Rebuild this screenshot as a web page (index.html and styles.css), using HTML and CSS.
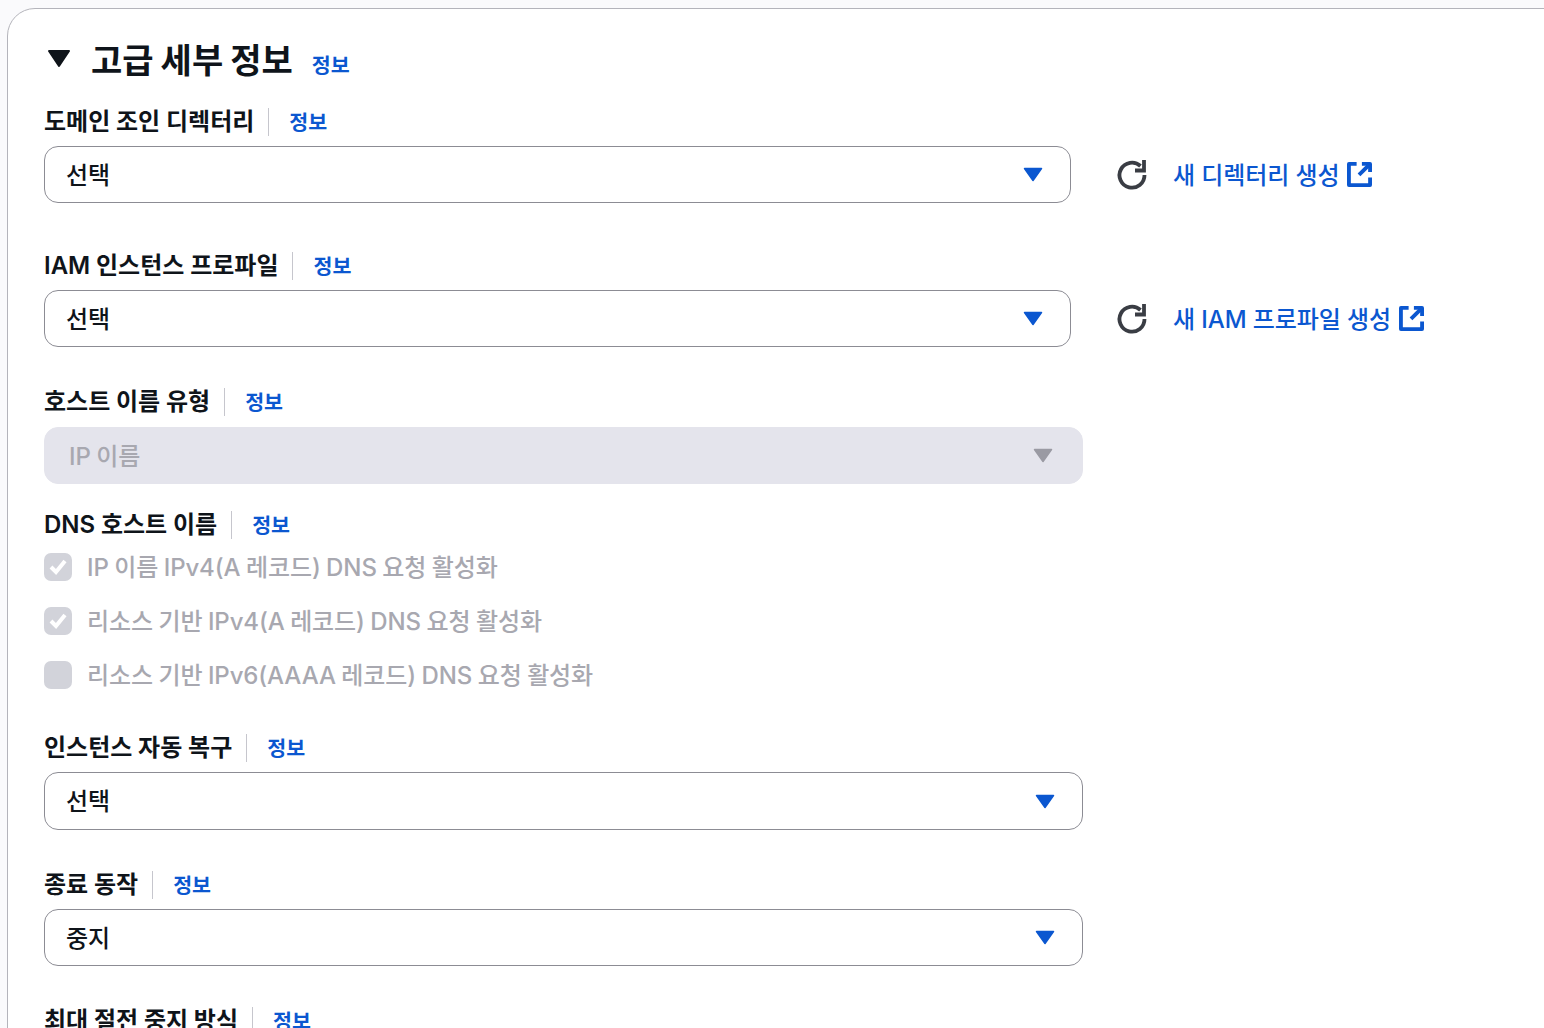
FILE: index.html
```html
<!DOCTYPE html>
<html lang="ko">
<head>
<meta charset="utf-8">
<title>고급 세부 정보</title>
<link rel="stylesheet" href="styles.css">
</head>
<body>
<section class="card">
  <header class="head">
    <svg class="caret" viewBox="0 0 24 20" aria-hidden="true"><path d="M2 2h20L12 17z"/></svg>
    <h2 class="title">고급 세부 정보</h2>
    <a class="info title-info">정보</a>
  </header>

  <div class="field first">
    <div class="label-row"><span class="label">도메인 조인 디렉터리</span><a class="info">정보</a></div>
    <div class="control-row">
      <div class="select narrow"><span class="value">선택</span><svg class="arrow" viewBox="0 0 20 15"><path d="M1.500 1.500h17L10 13.500z"/></svg></div>
      <svg class="refresh" viewBox="0 0 30 30" aria-hidden="true"><path d="M23.500 6A12.500 12.500 0 1 0 27.500 15"/><path d="M27 0v10.500H18"/></svg>
      <a class="ext"><span class="link-text">새 디렉터리 생성</span><svg class="ext-icon" viewBox="0 0 26 26" aria-hidden="true"><path d="M10 2H2v22h22v-8"/><path d="M15.500 2H24v8.500"/><path d="M23 3 12.500 13.500"/></svg></a>
    </div>
  </div>

  <div class="field second">
    <div class="label-row"><span class="label">IAM 인스턴스 프로파일</span><a class="info">정보</a></div>
    <div class="control-row">
      <div class="select narrow"><span class="value">선택</span><svg class="arrow" viewBox="0 0 20 15"><path d="M1.500 1.500h17L10 13.500z"/></svg></div>
      <svg class="refresh" viewBox="0 0 30 30" aria-hidden="true"><path d="M23.500 6A12.500 12.500 0 1 0 27.500 15"/><path d="M27 0v10.500H18"/></svg>
      <a class="ext"><span class="link-text">새 IAM 프로파일 생성</span><svg class="ext-icon" viewBox="0 0 26 26" aria-hidden="true"><path d="M10 2H2v22h22v-8"/><path d="M15.500 2H24v8.500"/><path d="M23 3 12.500 13.500"/></svg></a>
    </div>
  </div>

  <div class="field host">
    <div class="label-row"><span class="label">호스트 이름 유형</span><a class="info">정보</a></div>
    <div class="select wide disabled"><span class="value">IP 이름</span><svg class="arrow" viewBox="0 0 20 15"><path d="M1.500 1.500h17L10 13.500z"/></svg></div>
  </div>

  <div class="field dns">
    <div class="label-row"><span class="label">DNS 호스트 이름</span><a class="info">정보</a></div>
    <div class="checks">
      <label class="check"><span class="box"><svg viewBox="0 0 28 28"><path d="M7 14l5 5 9-11"/></svg></span><span class="check-text">IP 이름 IPv4(A 레코드) DNS 요청 활성화</span></label>
      <label class="check"><span class="box"><svg viewBox="0 0 28 28"><path d="M7 14l5 5 9-11"/></svg></span><span class="check-text">리소스 기반 IPv4(A 레코드) DNS 요청 활성화</span></label>
      <label class="check"><span class="box"></span><span class="check-text">리소스 기반 IPv6(AAAA 레코드) DNS 요청 활성화</span></label>
    </div>
  </div>

  <div class="field recovery">
    <div class="label-row"><span class="label">인스턴스 자동 복구</span><a class="info">정보</a></div>
    <div class="select wide"><span class="value">선택</span><svg class="arrow" viewBox="0 0 20 15"><path d="M1.500 1.500h17L10 13.500z"/></svg></div>
  </div>

  <div class="field">
    <div class="label-row"><span class="label">종료 동작</span><a class="info">정보</a></div>
    <div class="select wide"><span class="value">중지</span><svg class="arrow" viewBox="0 0 20 15"><path d="M1.500 1.500h17L10 13.500z"/></svg></div>
  </div>

  <div class="field">
    <div class="label-row"><span class="label">최대 절전 중지 방식</span><a class="info">정보</a></div>
  </div>
</section>
</body>
</html>
```
FILE: styles.css
```css
* { box-sizing: border-box; }
html, body { height: 100%; }
body {
  margin: 0;
  height: 1028px;
  overflow: hidden;
  background: #fafafc;
  color: #0f141a;
  font-family: Inter, "Noto Sans CJK KR", sans-serif;
  font-size: 24px;
}
.card {
  margin: 8px -60px 0 7px;
  height: 1200px;
  padding: 31px 36px 0 36px;
  background: #fff;
  border: 1px solid #b4b4bb;
  border-radius: 28px;
}
.head { display: flex; align-items: center; height: 41px; }
.caret { width: 24px; height: 20px; margin: 0 20px 0 3px; fill: #0f141a; stroke: #0f141a; stroke-width: 2; stroke-linejoin: round; position: relative; top: -2px; }
.title { margin: 0; font-size: 34px; font-weight: 700; line-height: 41px; word-spacing: -1px; }
.info { color: #0b57d0; font-size: 20.600px; font-weight: 600; line-height: 28px; cursor: pointer; }
.title-info { margin-left: 19px; position: relative; top: 5px; }
.field { margin-top: 41px; }
.first { margin-top: 27px; }
.second { margin-top: 49px; }
.dns { margin-top: 27px; }
.recovery { margin-top: 45px; }
.label-row { display: flex; align-items: center; height: 28px; margin-bottom: 10px; }
.host .label-row { margin-bottom: 11px; }
.label { font-weight: 600; line-height: 28px; padding-right: 14px; border-right: 1px solid #c6c6cd; word-spacing: -0.250px; }
.label + .info { margin-left: 20px; padding-top: 2px; }
.control-row { display: flex; align-items: center; }
.value, .check-text, .link-text { letter-spacing: -0.100px; font-weight: 500; }
.value { padding-bottom: 3px; word-spacing: -0.800px; }
.check-text { padding-bottom: 3px; word-spacing: -0.800px; }
.link-text { padding-bottom: 3px; }
.select {
  display: flex;
  align-items: center;
  justify-content: space-between;
  height: 57px;
  padding: 0 27px 0 21px;
  background: #fff;
  border: 1px solid #8c8c94;
  border-radius: 14px;
}
.recovery .select { height: 58px; }
.narrow { width: 1027px; }
.wide { width: 1039px; }
.arrow { width: 20px; height: 15px; fill: #0b57d0; stroke: #0b57d0; stroke-width: 1.500; stroke-linejoin: round; }
.disabled { padding: 0 29px 0 24px; background: #e4e4ec; border-color: #e4e4ec; color: #a8a8b0; }
.disabled .arrow { fill: #9a9aa3; stroke: #9a9aa3; }
.refresh { width: 30px; height: 30px; margin-left: 46px; overflow: visible; fill: none; stroke: #3a3d44; stroke-width: 3.800; }
.ext { display: flex; align-items: center; margin-left: 26px; color: #0b57d0; cursor: pointer; }
.ext-icon { width: 25px; height: 25px; margin-left: 8px; fill: none; stroke: #0b57d0; stroke-width: 4; stroke-linejoin: round; }
.checks { display: flex; flex-direction: column; gap: 26px; margin-top: 14px; }
.check { display: flex; align-items: center; gap: 15px; height: 28px; color: #a8a8b0; }
.box {
  display: block;
  width: 28px;
  height: 28px;
  background: #d2d3da;
  border-radius: 7px;
}
.box svg { display: block; width: 28px; height: 28px; fill: none; stroke: #fff; stroke-width: 4; }
```
